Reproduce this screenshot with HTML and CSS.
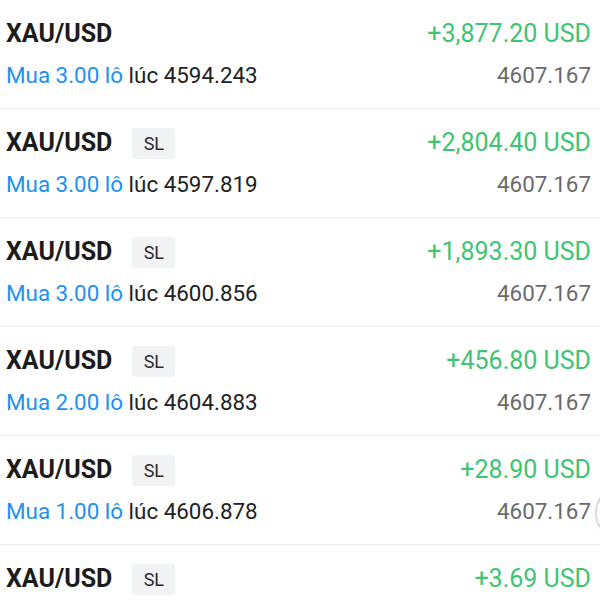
FILE: index.html
```html
<!DOCTYPE html>
<html lang="vi">
<head>
  <meta charset="UTF-8" />
  <meta name="viewport" content="width=device-width, initial-scale=1.0"/>
  <title>Vị thế | XAU/USD</title>
  <link rel="stylesheet" href="styles.css">
</head>
<body>

  <div class="positions">
    <div class="position">
      <div class="line head">
        <div class="symbol">XAU/USD</div>
        <div class="profit">+3,877.20 USD</div>
      </div>
      <div class="line">
        <div class="order"><span class="side">Mua 3.00 lô</span> lúc 4594.243</div>
        <div class="price">4607.167</div>
      </div>
    </div>

    <div class="position">
      <div class="line head">
        <div class="symbol">XAU/USD <span class="tag">SL</span></div>
        <div class="profit">+2,804.40 USD</div>
      </div>
      <div class="line">
        <div class="order"><span class="side">Mua 3.00 lô</span> lúc 4597.819</div>
        <div class="price">4607.167</div>
      </div>
    </div>

    <div class="position">
      <div class="line head">
        <div class="symbol">XAU/USD <span class="tag">SL</span></div>
        <div class="profit">+1,893.30 USD</div>
      </div>
      <div class="line">
        <div class="order"><span class="side">Mua 3.00 lô</span> lúc 4600.856</div>
        <div class="price">4607.167</div>
      </div>
    </div>

    <div class="position">
      <div class="line head">
        <div class="symbol">XAU/USD <span class="tag">SL</span></div>
        <div class="profit">+456.80 USD</div>
      </div>
      <div class="line">
        <div class="order"><span class="side">Mua 2.00 lô</span> lúc 4604.883</div>
        <div class="price">4607.167</div>
      </div>
    </div>

    <div class="position">
      <div class="line head">
        <div class="symbol">XAU/USD <span class="tag">SL</span></div>
        <div class="profit">+28.90 USD</div>
      </div>
      <div class="line">
        <div class="order"><span class="side">Mua 1.00 lô</span> lúc 4606.878</div>
        <div class="price">4607.167</div>
      </div>
    </div>

    <div class="position last">
      <div class="line head">
        <div class="symbol">XAU/USD <span class="tag">SL</span></div>
        <div class="profit">+3.69 USD</div>
      </div>
    </div>
  </div>

  <div class="float-btn"></div>

</body>
</html>
```

FILE: styles.css
```css
* {
  margin: 0;
  padding: 0;
  box-sizing: border-box;
  font-family: Roboto, 'Noto Sans', sans-serif;
}

body {
  background: #ffffff;
  overflow: hidden;
  height: 100vh;
}

.positions {
  display: flex;
  flex-direction: column;
}

.position {
  display: flex;
  flex-direction: column;
  gap: 11px;
  padding: 19px 9px 18px 6px;
  border-bottom: 1px solid #ededed;
}

.position.last {
  border-bottom: none;
}

.position .line {
  display: flex;
  justify-content: space-between;
  align-items: center;
  height: 30px;
  font-size: 22.4px;
  line-height: 30px;
}

.position .line.head {
  font-size: 25px;
}

.symbol {
  display: flex;
  align-items: center;
  gap: 20px;
  font-weight: 700;
  color: #1c1c1c;
}

.tag {
  display: inline-block;
  width: 43px;
  height: 31px;
  line-height: 31px;
  text-align: center;
  font-size: 18px;
  font-weight: 400;
  color: #2b2b2b;
  background: #f2f3f5;
  border-radius: 3px;
}

.profit {
  color: #3ec472;
}

.order {
  color: #222;
}

.order .side {
  color: #2291ee;
}

.price {
  color: #6b6b6b;
}

.float-btn {
  position: absolute;
  left: 595px;
  top: 487px;
  width: 52px;
  height: 52px;
  border-radius: 50%;
  background: #fff;
  border: 2px solid #dcdcdc;
  box-shadow: 0 0 3px rgba(0, 0, 0, 0.1);
}
```
